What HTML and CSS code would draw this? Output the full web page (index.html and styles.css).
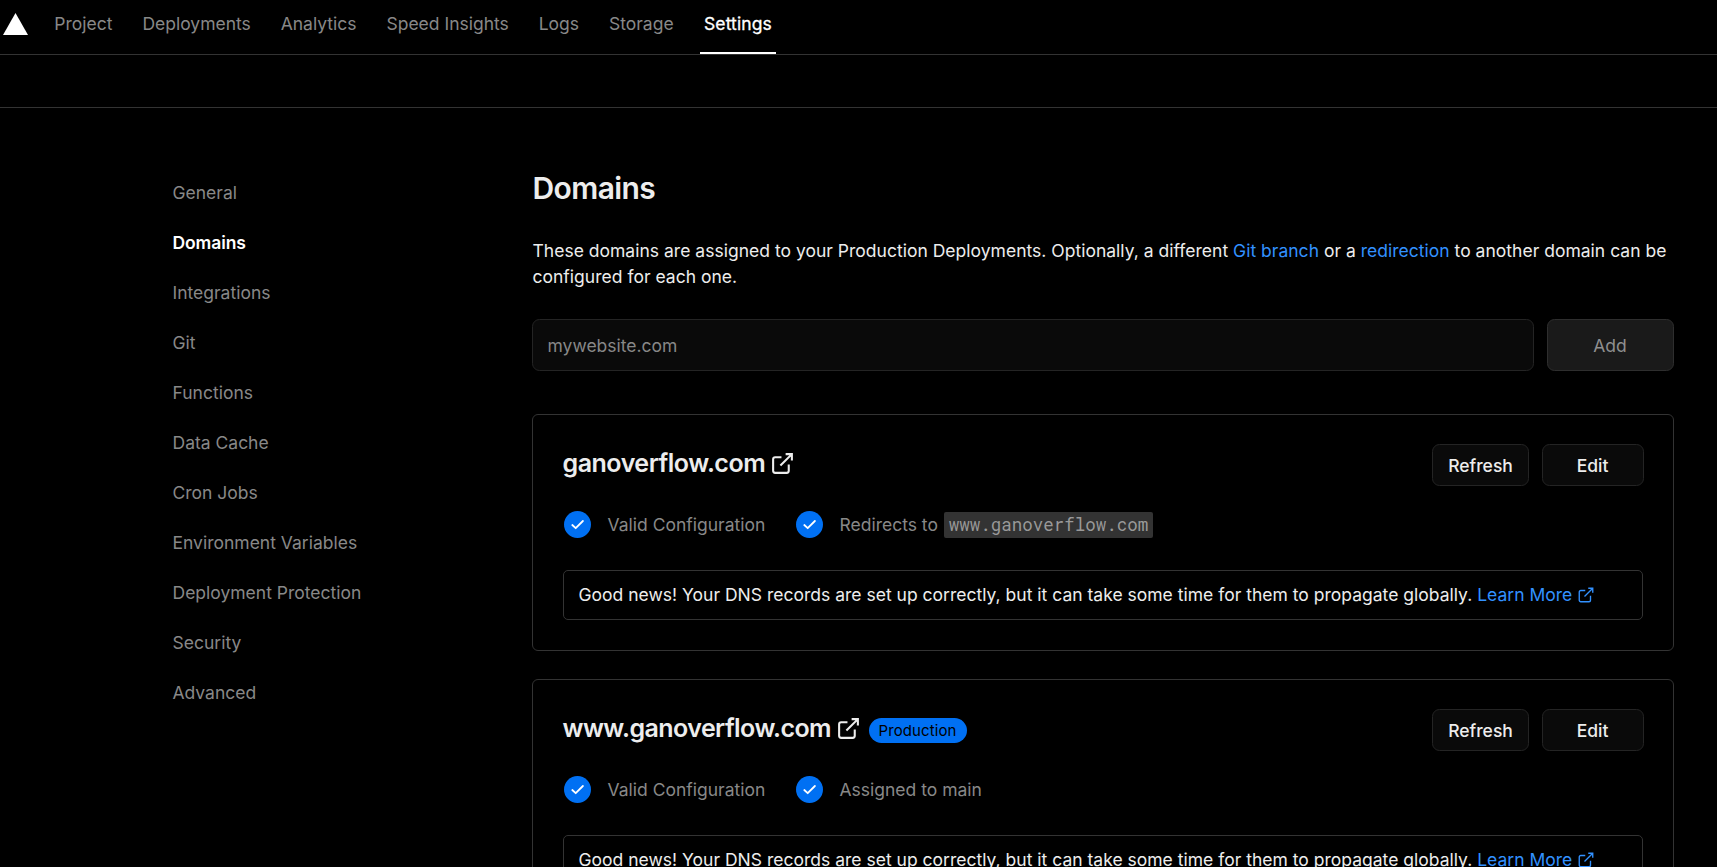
FILE: index.html
```html
<!DOCTYPE html>
<html lang="en">
<head>
<meta charset="utf-8">
<title>Domains</title>
<link rel="stylesheet" href="styles.css">
</head>
<body>
<svg class="defs" width="0" height="0" aria-hidden="true">
  <symbol id="external" viewBox="0 0 24 24"><path d="M18 13v6a2 2 0 0 1-2 2H5a2 2 0 0 1-2-2V8a2 2 0 0 1 2-2h6M15 3h6v6M10 14L21 3"/></symbol>
  <symbol id="check" viewBox="0 0 27 27"><circle cx="13.5" cy="13.5" r="13.5"/><path d="M8.3 14l3.4 3.2 7.2-7.2"/></symbol>
</svg>
<header class="topbar">
  <svg class="logo" viewBox="0 0 25 22"><path d="M12.5 0L25 22H0z"/></svg>
  <nav class="tabs">
    <a class="tab">Project</a>
    <a class="tab">Deployments</a>
    <a class="tab">Analytics</a>
    <a class="tab">Speed Insights</a>
    <a class="tab">Logs</a>
    <a class="tab">Storage</a>
    <a class="tab active">Settings</a>
  </nav>
</header>
<div class="subbar"></div>
<div class="page">
  <nav class="side">
    <a>General</a>
    <a class="current">Domains</a>
    <a>Integrations</a>
    <a>Git</a>
    <a>Functions</a>
    <a>Data Cache</a>
    <a>Cron Jobs</a>
    <a>Environment Variables</a>
    <a>Deployment Protection</a>
    <a>Security</a>
    <a>Advanced</a>
  </nav>
  <main class="content">
    <h1>Domains</h1>
    <p class="intro">These domains are assigned to your Production Deployments. Optionally, a different <a class="link">Git branch</a> or a <a class="link">redirection</a> to another domain can be configured for each one.</p>
    <form class="add">
      <input class="field" type="text" placeholder="mywebsite.com">
      <button class="submit" type="button">Add</button>
    </form>
    <section class="card">
      <div class="card-head">
        <h2>ganoverflow.com</h2>
        <svg class="ext"><use href="#external"/></svg>
        <div class="actions"><button class="btn refresh">Refresh</button><button class="btn edit">Edit</button></div>
      </div>
      <div class="status">
        <div class="state first"><svg class="ok"><use href="#check"/></svg><span>Valid Configuration</span></div>
        <div class="state"><svg class="ok"><use href="#check"/></svg><span>Redirects to <code>www.ganoverflow.com</code></span></div>
      </div>
      <div class="note">Good news! Your DNS records are set up correctly, but it can take some time for them to propagate globally.&nbsp;<a class="link">Learn More</a><svg class="ext small"><use href="#external"/></svg></div>
    </section>
    <section class="card">
      <div class="card-head">
        <h2 class="www">www.ganoverflow.com</h2>
        <svg class="ext"><use href="#external"/></svg>
        <span class="badge">Production</span>
        <div class="actions"><button class="btn refresh">Refresh</button><button class="btn edit">Edit</button></div>
      </div>
      <div class="status">
        <div class="state first"><svg class="ok"><use href="#check"/></svg><span>Valid Configuration</span></div>
        <div class="state"><svg class="ok"><use href="#check"/></svg><span>Assigned to main</span></div>
      </div>
      <div class="note">Good news! Your DNS records are set up correctly, but it can take some time for them to propagate globally.&nbsp;<a class="link">Learn More</a><svg class="ext small"><use href="#external"/></svg></div>
    </section>
  </main>
</div>
</body>
</html>
```
FILE: styles.css
```css
* { box-sizing: border-box; }
html, body { height: 100%; overflow: hidden; }
body {
  margin: 0;
  background: #000;
  color: #ededed;
  font: 17.5px/26px Inter, "Liberation Sans", sans-serif;
}
h1, h2, p { margin: 0; }
button, input { font: inherit; }
.defs { display: block; position: absolute; }
.topbar {
  display: flex;
  height: 55px;
  padding-left: 3px;
  border-bottom: 1px solid #333;
}
.logo { width: 25px; height: 22px; margin-top: 13px; fill: #fff; }
.tabs { display: flex; gap: 22.4px; margin-left: 22.6px; }
.tab { height: 54px; padding: 11px 3.75px 0; color: #888; white-space: nowrap; }
.tab.active { width: 76.5px; padding-left: 4.25px; color: #fff; border-bottom: 2px solid #fff; letter-spacing: 0.12px; -webkit-text-stroke: 0.3px #fff; }
.subbar { height: 53px; border-bottom: 1px solid #333; }
.page { display: flex; }
.side { display: flex; flex-direction: column; width: 532px; padding: 72px 0 0 172.5px; color: #888; }
.side a { height: 50px; }
.side .current { color: #fff; font-weight: 600; letter-spacing: -0.1px; }
.content { width: 1142px; padding-top: 60px; }
h1 { padding-left: 0.5px; font-size: 30px; font-weight: 600; line-height: 40px; letter-spacing: -0.6px; }
.intro { margin-top: 30px; padding-left: 0.5px; letter-spacing: 0.014px; }
.link { color: #3291ff; }
.add { display: flex; gap: 13px; margin: 29px 0 43px; }
.field {
  flex: 1;
  height: 52px;
  padding: 0 14.5px;
  color: #ededed;
  background: #0a0a0a;
  border: 1px solid #242424;
  border-radius: 7.5px;
}
.field::placeholder { color: #878787; opacity: 1; }
.submit { width: 127px; padding: 1px 1px 0 0; color: #8f8f8f; background: #1a1a1a; border: 1px solid #2e2e2e; border-radius: 7.5px; }
.card { height: 237px; margin-bottom: 28px; padding: 29px 29px 0 30px; border: 1px solid #333; border-radius: 6px; }
.card-head { display: flex; height: 42px; }
h2 { margin-left: -0.5px; font-size: 25px; font-weight: 600; line-height: 38px; letter-spacing: -0.48px; }
.www { letter-spacing: -0.55px; }
.ext { width: 25px; height: 25px; margin: 7px 0 0 5px; fill: none; stroke: currentColor; stroke-width: 2; }
.ext.small { width: 18px; height: 18px; margin: 0 0 0 4.5px; color: #3291ff; stroke-width: 1.8; }
.badge { height: 25px; margin: 9px 0 0 7.5px; padding: 0 10px; border-radius: 13px; color: #000; background: #0070f3; font-size: 15px; line-height: 25px; letter-spacing: 0.1px; }
.actions { display: flex; gap: 13px; margin-left: auto; }
.btn { height: 42px; padding: 2px 0 0; color: #ededed; background: #0a0a0a; border: 1px solid #242424; border-radius: 7.5px; font-weight: 500; }
.refresh { width: 97px; }
.edit { width: 102px; padding-right: 1px; }
.status { display: flex; height: 27px; margin-top: 25px; padding-left: 1px; color: #888; }
.state { display: flex; gap: 16.5px; line-height: 27px; }
.first { width: 232px; }
.ok { width: 27px; height: 27px; }
#check circle { fill: #0070f3; }
#check path { fill: none; stroke: #fff; stroke-width: 1.8; stroke-linecap: round; stroke-linejoin: round; }
code { display: inline-block; height: 26px; margin-left: 1px; padding: 0 5px; border-radius: 2px; background: #333; color: #999; font: 17.5px/26px "Roboto Mono", "DejaVu Sans Mono", monospace; }
.note { display: flex; align-items: center; height: 50px; margin: 32px 1px 0 0; padding-left: 14.5px; border: 1px solid #333; border-radius: 5px; letter-spacing: 0.008px; }
```
